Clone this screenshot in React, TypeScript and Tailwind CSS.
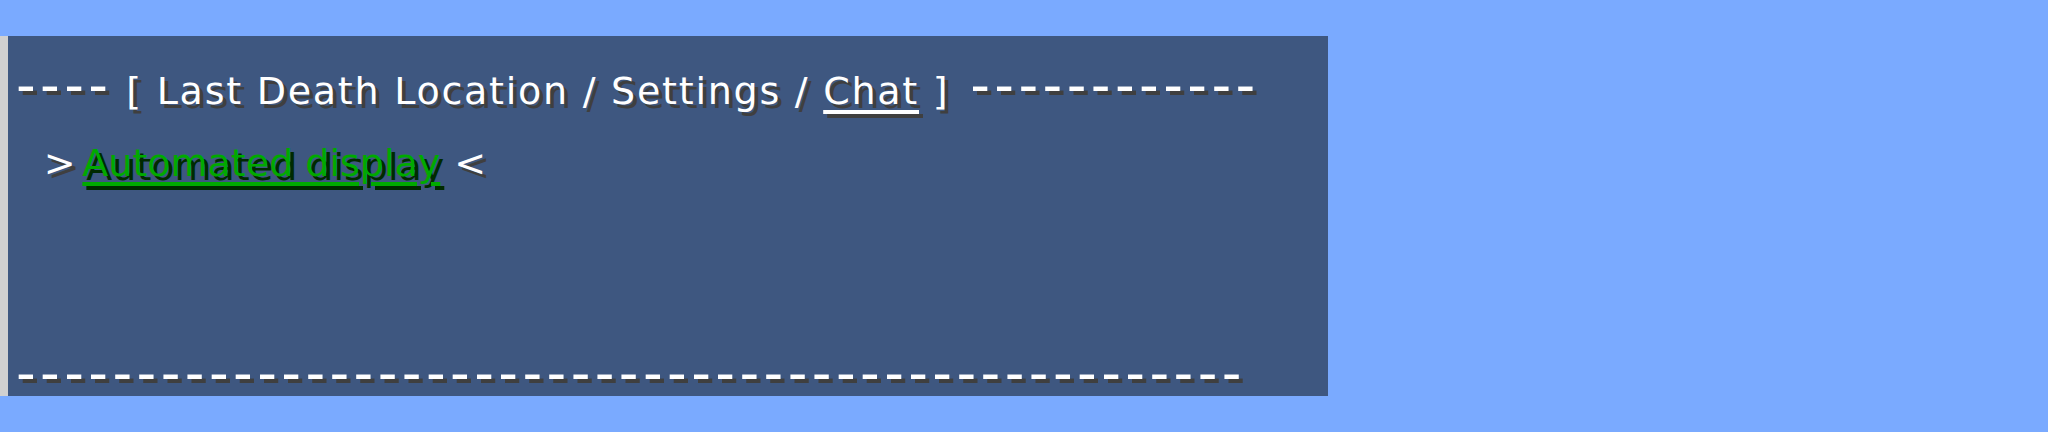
const Dashes = ({ n, lead }: { n: number; lead?: boolean }) => (
  <span
    className={
      lead
        ? "-ml-[7px] mr-[7px] font-['DejaVu_Sans_Mono',monospace] text-[56px] leading-[0] tracking-[-9.6px]"
        : "font-['DejaVu_Sans_Mono',monospace] text-[56px] leading-[0] tracking-[-9.6px]"
    }
  >
    {'-'.repeat(n)}
  </span>
);

const Row = ({ children }: { children?: React.ReactNode }) => (
  <div className="h-[36px] pl-[8px] pt-[1px] whitespace-pre leading-[36px] text-[38px] text-white [text-shadow:4px_4px_0_#3f3f3f]">
    {children}
  </div>
);

export default function App() {
  return (
    <div className="w-[2048px] h-[432px] bg-[#7aaaff] pt-[36px] font-['DejaVu_Sans',sans-serif]">
      <div className="flex w-[1328px] h-[360px] bg-[#3e5780]">
        <div className="w-[8px] bg-[#d0d0d0]"></div>
        <div className="flex-1 flex flex-col">
          <Row />
          <Row>
            <Dashes n={4} lead />
            <span className="tracking-[1.75px]">
              {' [ Last Death Location / Settings / '}
              <span className="underline decoration-[4px] underline-offset-[6px]">Chat</span>
              {' ] '}
            </span>
            <Dashes n={12} />
          </Row>
          <Row />
          <Row>
            <span className="tracking-[1.75px]">{'  >'}</span>
            <span className="tracking-[-7px]">{' '}</span>
            <span className="text-[#00aa00] underline decoration-[4px] underline-offset-[6px] [text-shadow:4px_4px_0_#002a00]">
              Automated display
            </span>
            <span className="tracking-[1.75px]">{' <'}</span>
          </Row>
          <Row />
          <Row />
          <Row />
          <Row />
          <Row />
          <Row>
            <Dashes n={51} lead />
          </Row>
        </div>
      </div>
    </div>
  );
}
